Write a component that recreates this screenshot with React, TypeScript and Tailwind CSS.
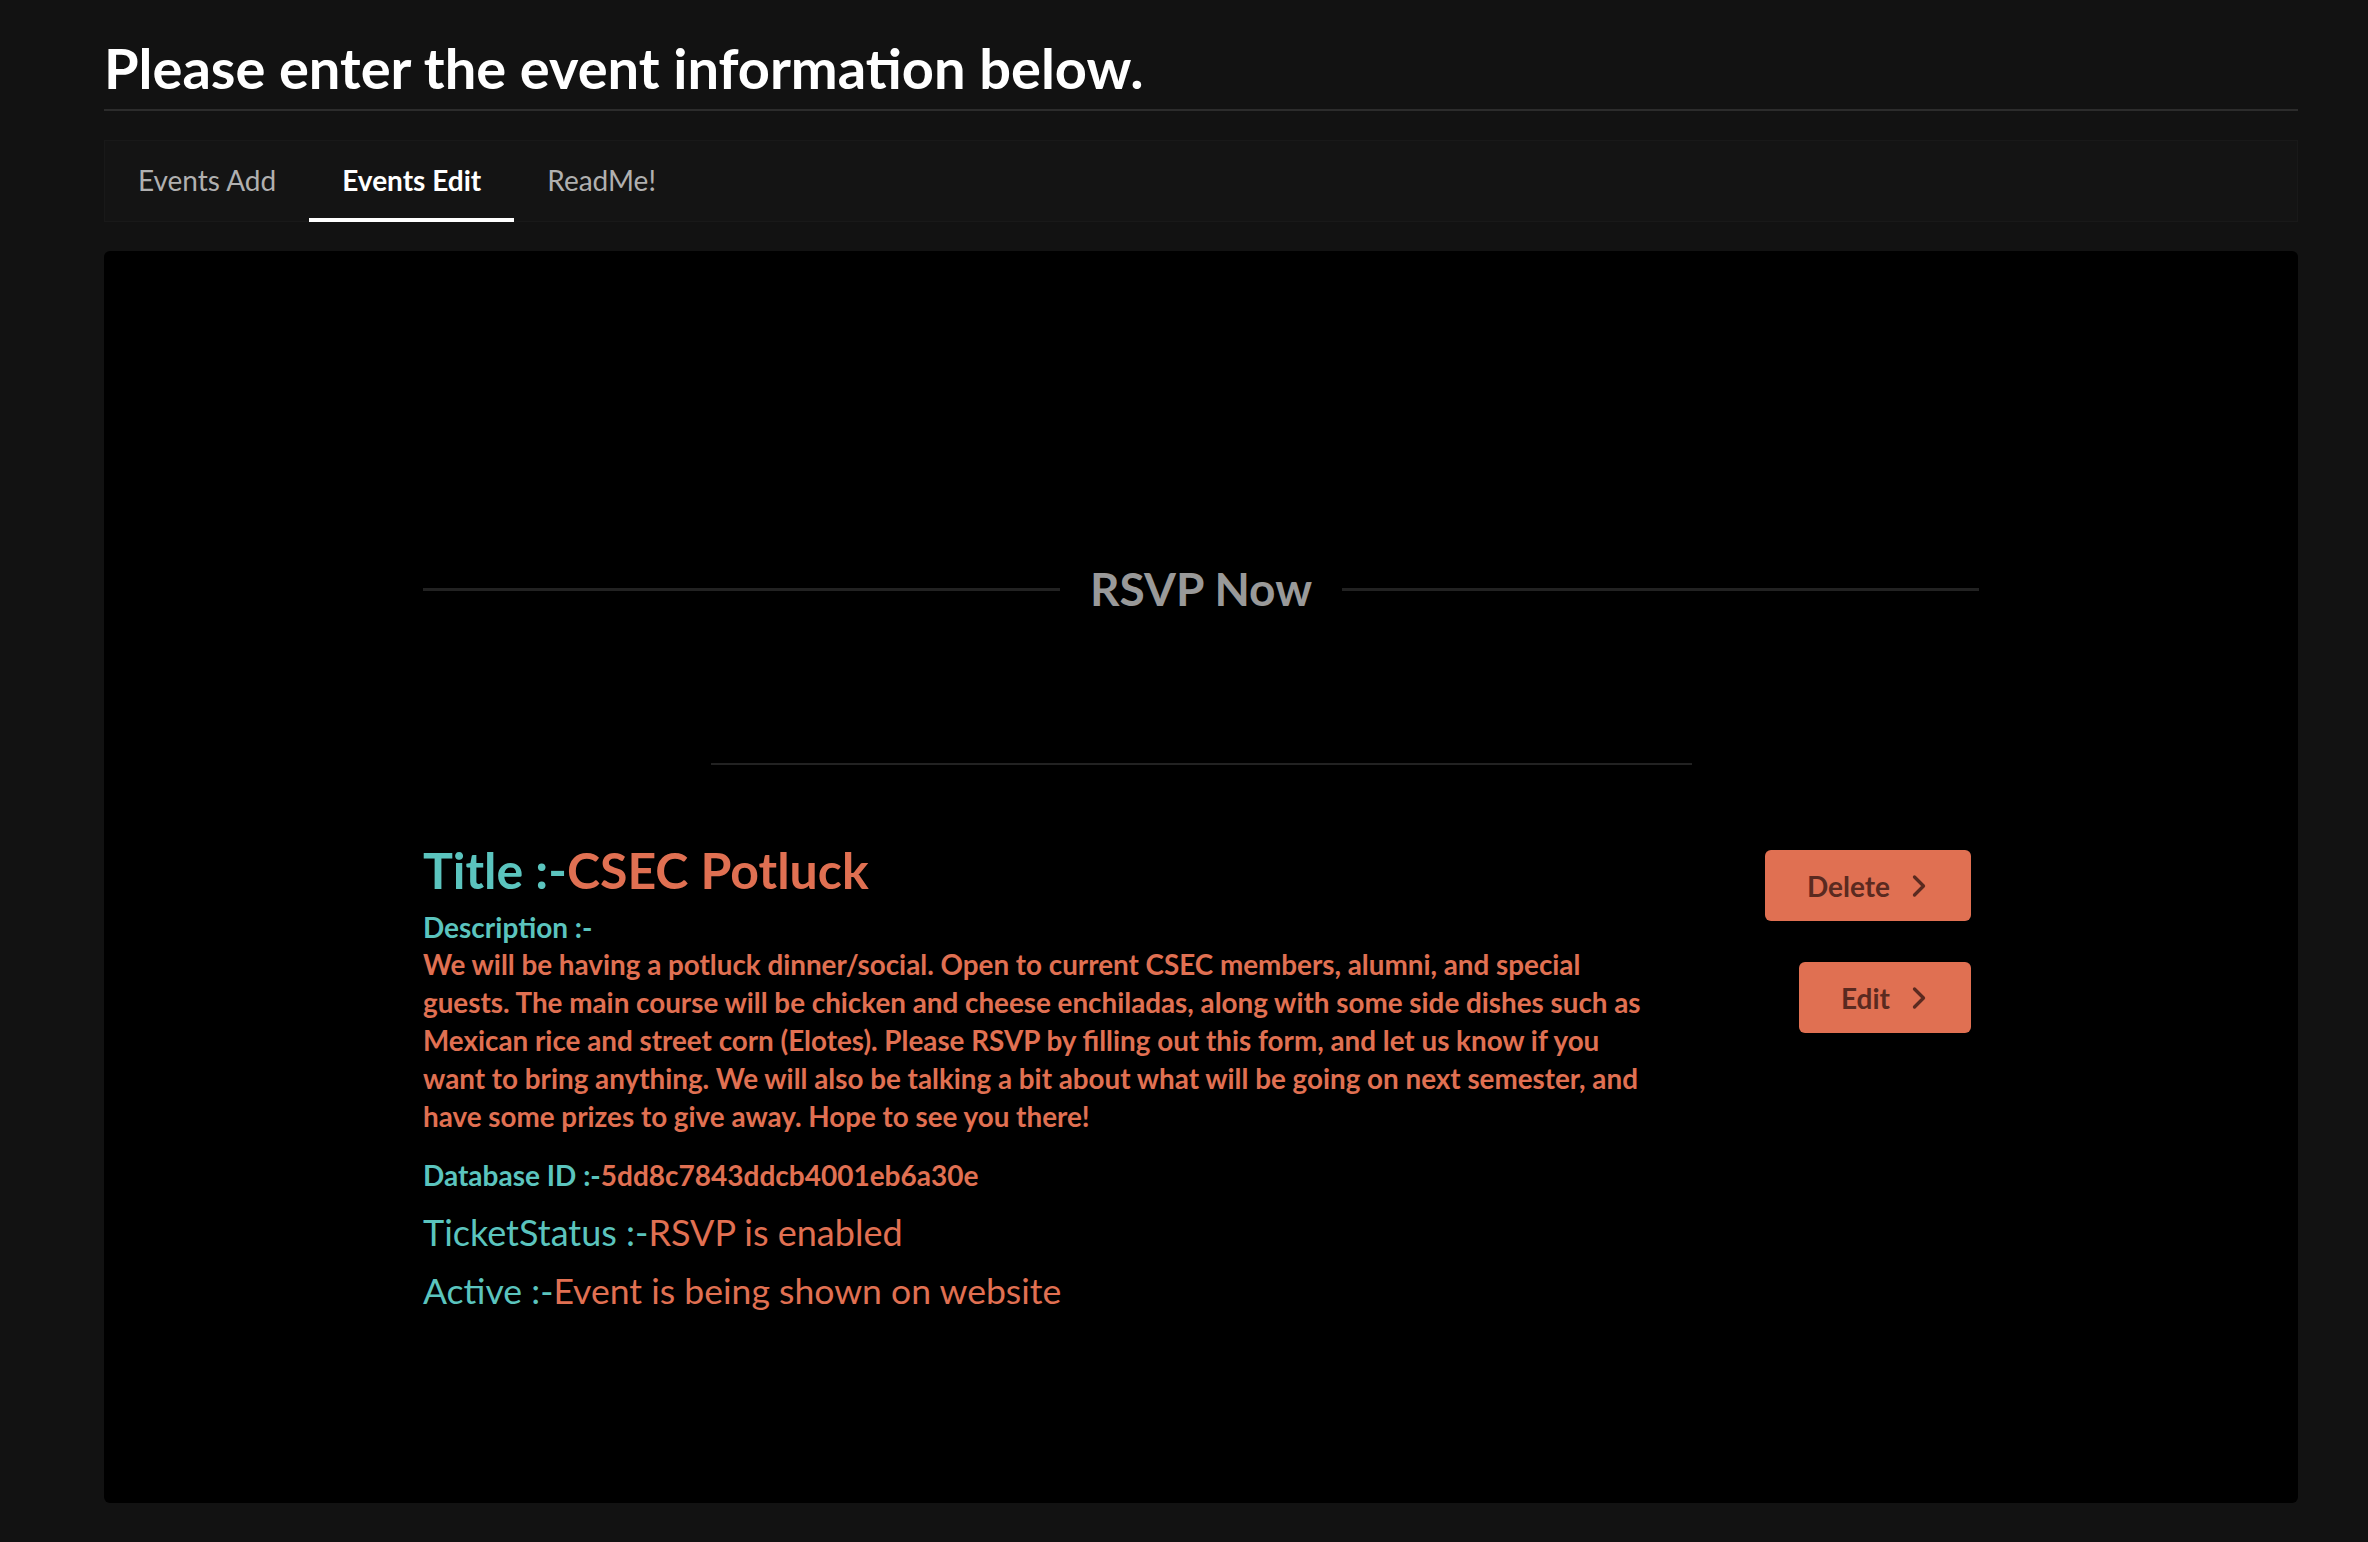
import { ChevronRight } from "lucide-react";

const tabs = ["Events Add", "Events Edit", "ReadMe!"];

function ActionButton({ label }: { label: string }) {
    return (
        <button className="flex items-center h-[71px] pl-[42px] pr-[34px] rounded-md bg-[#e07052] text-[#5a2a20] text-[28px] font-bold">
            <span>{label}</span>
            <ChevronRight size={36} strokeWidth={2.2} className="ml-[11px]" />
        </button>
    );
}

export default function App() {
    return (
        <div className="min-h-[1542px] w-full bg-[#121212] font-['Lato','Noto_Sans',sans-serif]">
            <div className="ml-[104px] w-[2194px] pt-[35px]">
                <h1 className="text-[56px] font-bold text-white leading-[66px] pb-[8px] border-b-2 border-[#2c2c2c]">
                    Please enter the event information below.
                </h1>

                {/* Tabs */}
                <div className="mt-[29px] h-[82px] flex bg-[#141414] border border-[#191919]">
                    {tabs.map((t, i) => (
                        <div
                            key={t}
                            className={
                                i === 1
                                    ? "relative flex items-center px-[33px] pb-[2px] text-[28px] font-bold text-white"
                                    : "relative flex items-center px-[33px] pb-[2px] text-[28px] text-[#b0b0b0]"
                            }
                        >
                            {t}
                            {i === 1 && <div className="absolute left-0 right-0 bottom-[-1px] h-[4px] bg-white" />}
                        </div>
                    ))}
                </div>

                {/* Card */}
                <div className="mt-[29px] h-[1252px] rounded-md bg-black px-[319px] pt-[310px]">
                    <div className="flex items-center gap-[30px]">
                        <div className="flex-1 h-[3px] bg-[#222]" />
                        <div className="text-[46px] font-bold text-[#999] leading-[56px]">RSVP Now</div>
                        <div className="flex-1 h-[3px] bg-[#222]" />
                    </div>

                    <div className="mx-auto mt-[146px] w-[981px] h-[2px] bg-[#222]" />

                    <div className="mt-[76px] flex justify-between">
                        <div className="w-[1235px]">
                            <div className="text-[50px] font-bold leading-[58px]">
                                <span className="text-[#5bc4be]">Title :-</span>
                                <span className="text-[#e07052]">CSEC Potluck</span>
                            </div>
                            <div className="mt-[9px] text-[28px] font-bold leading-[38px] text-[#5bc4be]">Description :-</div>
                            <p className="text-[27.8px] font-bold leading-[38px] text-[#e07052]">
                                We will be having a potluck dinner/social. Open to current CSEC members, alumni, and special guests. The main course will be chicken and cheese enchiladas, along with some side dishes such as Mexican rice and street corn (Elotes). Please RSVP by filling out this form, and let us know if you want to bring anything. We will also be talking a bit about what will be going on next semester, and have some prizes to give away. Hope to see you there!
                            </p>
                            <div className="mt-[20px] text-[28px] font-bold leading-[38px]">
                                <span className="text-[#5bc4be]">Database ID :-</span>
                                <span className="text-[#e07052]">5dd8c7843ddcb4001eb6a30e</span>
                            </div>
                            <div className="mt-[16px] text-[36px] leading-[44px]">
                                <span className="text-[#5bc4be]">TicketStatus :-</span>
                                <span className="text-[#e07052]">RSVP is enabled</span>
                            </div>
                            <div className="mt-[15px] text-[35.6px] leading-[44px]">
                                <span className="text-[#5bc4be]">Active :-</span>
                                <span className="text-[#e07052]">Event is being shown on website</span>
                            </div>
                        </div>
                        <div className="flex flex-col items-end gap-[41px] pt-[9px] pr-[8px]">
                            <ActionButton label="Delete" />
                            <ActionButton label="Edit" />
                        </div>
                    </div>
                </div>
            </div>
        </div>
    );
}
